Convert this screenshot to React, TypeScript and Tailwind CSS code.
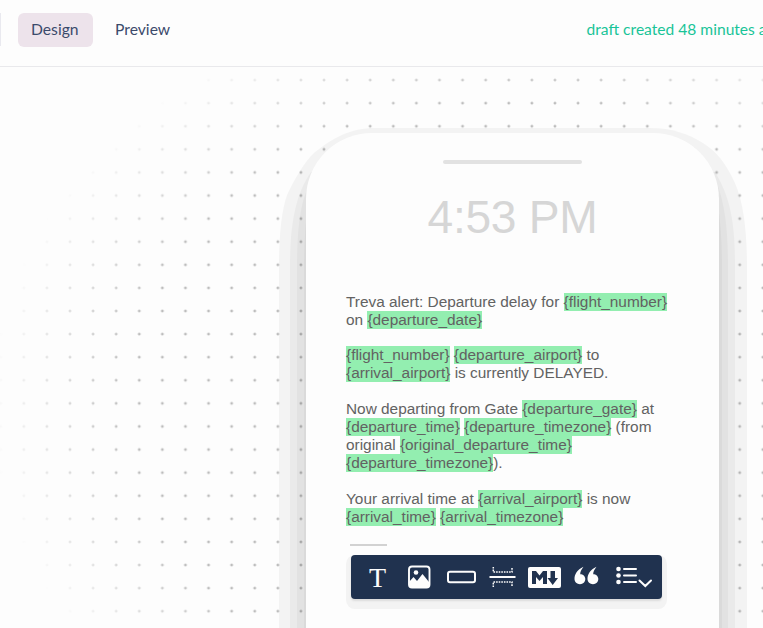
import React from "react";

function Token({ children }: { children: string }) {
  return <span className="bg-[#93eeb0] pb-px">{`{${children}}`}</span>;
}

const dots = {
  backgroundImage: "radial-gradient(circle at center, #bcbcbc 0.9px, transparent 1.8px)",
};

function PhoneShadow() {
  return (
    <svg className="absolute -left-[30px] -top-[8px]" width="480" height="520" viewBox="276 125 480 520">
      <path fill="#000" fillOpacity=".04" d="M279 640V265C279 238 281 212 287 195C294 180 304 162 315 152C333 138 350 128 375 128H650C673 128 688 134 703 143C717 152 725 162 735 183C744 203 747 235 747 265V640Z" />
      <path fill="#000" fillOpacity=".035" d="M290 640V265C290 225 295 195 311 172H715C731 198 735 225 735 265V640Z" />
      <path fill="#000" fillOpacity=".03" d="M297 640V265C297 225 301 200 310 183H717C725 205 728 230 728 265V640Z" />
      <path fill="#000" fillOpacity=".03" d="M304 640V265C304 245 305 225 308 205H718C721 225 722 245 722 265V640Z" />
    </svg>
  );
}

function Toolbar() {
  return (
    <div className="relative ml-[5px] mt-[9px] flex h-11 w-[311px] shrink-0 items-center rounded bg-[#20324f] shadow-[0_2px_2px_0_#dcdcdc,0_5px_0_5px_#f3f3f3]">
      <svg width="311" height="44" viewBox="351 555 311 44" fill="none" stroke="#fdfdfd">
        <text x="377.5" y="586.6" textAnchor="middle" fill="#fdfdfd" stroke="none" fontFamily="Liberation Serif, serif" fontSize="28">T</text>
        <rect x="409" y="566.5" width="20.5" height="21" rx="3" strokeWidth="1.9" />
        <circle cx="416" cy="572.5" r="2.3" fill="#fdfdfd" stroke="none" />
        <path fill="#fdfdfd" stroke="none" d="M409 582L413.5 577L417 581L422.5 574L429 582V587H410Z" />
        <rect x="448" y="571.8" width="27" height="10.4" rx="2" strokeWidth="2" />
        <path strokeWidth="2" d="M489.5 577H515.5" />
        <path strokeWidth="1.5" strokeDasharray="1.6 1" d="M493.3 567V572H512V567M493.3 587V582H512V587" />
        <rect x="528" y="567" width="33" height="21" rx="2" fill="#fdfdfd" stroke="none" />
        <path fill="#20324f" stroke="none" d="M532 584V571H536L539.5 575.5L543 571H547V584H543V577L539.5 581L536 577V584ZM550.5 571H555V578H558L552.7 585L547.5 578H550.5Z" />
        <path fill="#fdfdfd" stroke="none" d="M583.5 566.7C577 569.5 574.5 574.5 574.5 579C574.5 582 577 584.2 580 584.2C583 584.2 585.3 582 585.3 579.1C585.3 576.2 583 574.2 580.2 574.2C580.2 571.5 581.5 569.5 583.5 566.7ZM596.5 566.7C590 569.5 587.5 574.5 587.5 579C587.5 582 590 584.2 593 584.2C596 584.2 598.3 582 598.3 579.1C598.3 576.2 596 574.2 593.2 574.2C593.2 571.5 594.5 569.5 596.5 566.7Z" />
        <g fill="#fdfdfd" stroke="none">
          <circle cx="618.5" cy="569" r="2.3" />
          <circle cx="618.5" cy="575.5" r="2.3" />
          <circle cx="618.5" cy="582" r="2.3" />
        </g>
        <path strokeWidth="2" strokeLinecap="round" d="M624 569H636M624 575.5H636M624 582H636M639.5 580.5L645.3 586L651 580.5" />
      </svg>
    </div>
  );
}

export default function App() {
  return (
    <div className="flex h-[628px] w-[763px] flex-col overflow-hidden bg-[#fdfdfd] font-['Lato','Open_Sans',sans-serif]">
      <header className="flex h-[67px] shrink-0 items-start border-b border-[#e9e9ec] pt-[13px] text-[15.7px] text-[#3b4a6b]">
        <div className="h-[33px] w-px bg-[#e9e9ef]" />
        <span className="ml-[17px] h-[34px] w-[75px] rounded-md bg-[#ede3eb] pl-[13px] leading-[33px]">Design</span>
        <span className="ml-[22px] leading-[33px]">Preview</span>
        <span className="ml-auto w-[176.5px] whitespace-nowrap text-[15.6px] leading-[33px] text-[#19c498]">draft created 48 minutes ago</span>
      </header>
      <main className="relative flex-1 pl-[306px] pt-[66px]">
        <div
          className="absolute inset-0 bg-size-[23.1px_23.1px] bg-position-[12.250px_1.500px] mask-[radial-gradient(522px_412px_at_512px_337px,#000_73%,transparent_100%)]"
          style={dots}
        />
        <div className="relative w-[413px]">
          <PhoneShadow />
          <section className="relative flex h-[560px] flex-col rounded-t-[66px] bg-[#fdfdfd] px-10 pt-[27px] font-['Liberation_Sans',Arial,sans-serif]">
            <div className="h-1 w-[139px] shrink-0 self-center rounded-full bg-[#e2e2e2]" />
            <div className="mt-[26px] text-center text-[46.2px] leading-[54px] tracking-[-0.3px] text-[#d6d6d6]">4:53 PM</div>
            <div className="mt-[49px] whitespace-nowrap text-[15.4px] leading-[18px] text-[#626262]">
              <p>Treva alert: Departure delay for <Token>flight_number</Token><br />on <Token>departure_date</Token></p>
              <p className="mt-[17px]"><Token>flight_number</Token> <Token>departure_airport</Token> to<br /><Token>arrival_airport</Token> is currently DELAYED.</p>
              <p className="mt-[18px]">Now departing from Gate <Token>departure_gate</Token> at<br /><Token>departure_time</Token> <Token>departure_timezone</Token> (from<br />original <Token>original_departure_time</Token><br /><Token>departure_timezone</Token>).</p>
              <p className="mt-[18px]">Your arrival time at <Token>arrival_airport</Token> is now<br /><Token>arrival_time</Token> <Token>arrival_timezone</Token></p>
            </div>
            <div className="ml-1 mt-[18px] h-0.5 w-[37px] shrink-0 bg-[#d2d2d2]" />
            <Toolbar />
          </section>
        </div>
      </main>
    </div>
  );
}
